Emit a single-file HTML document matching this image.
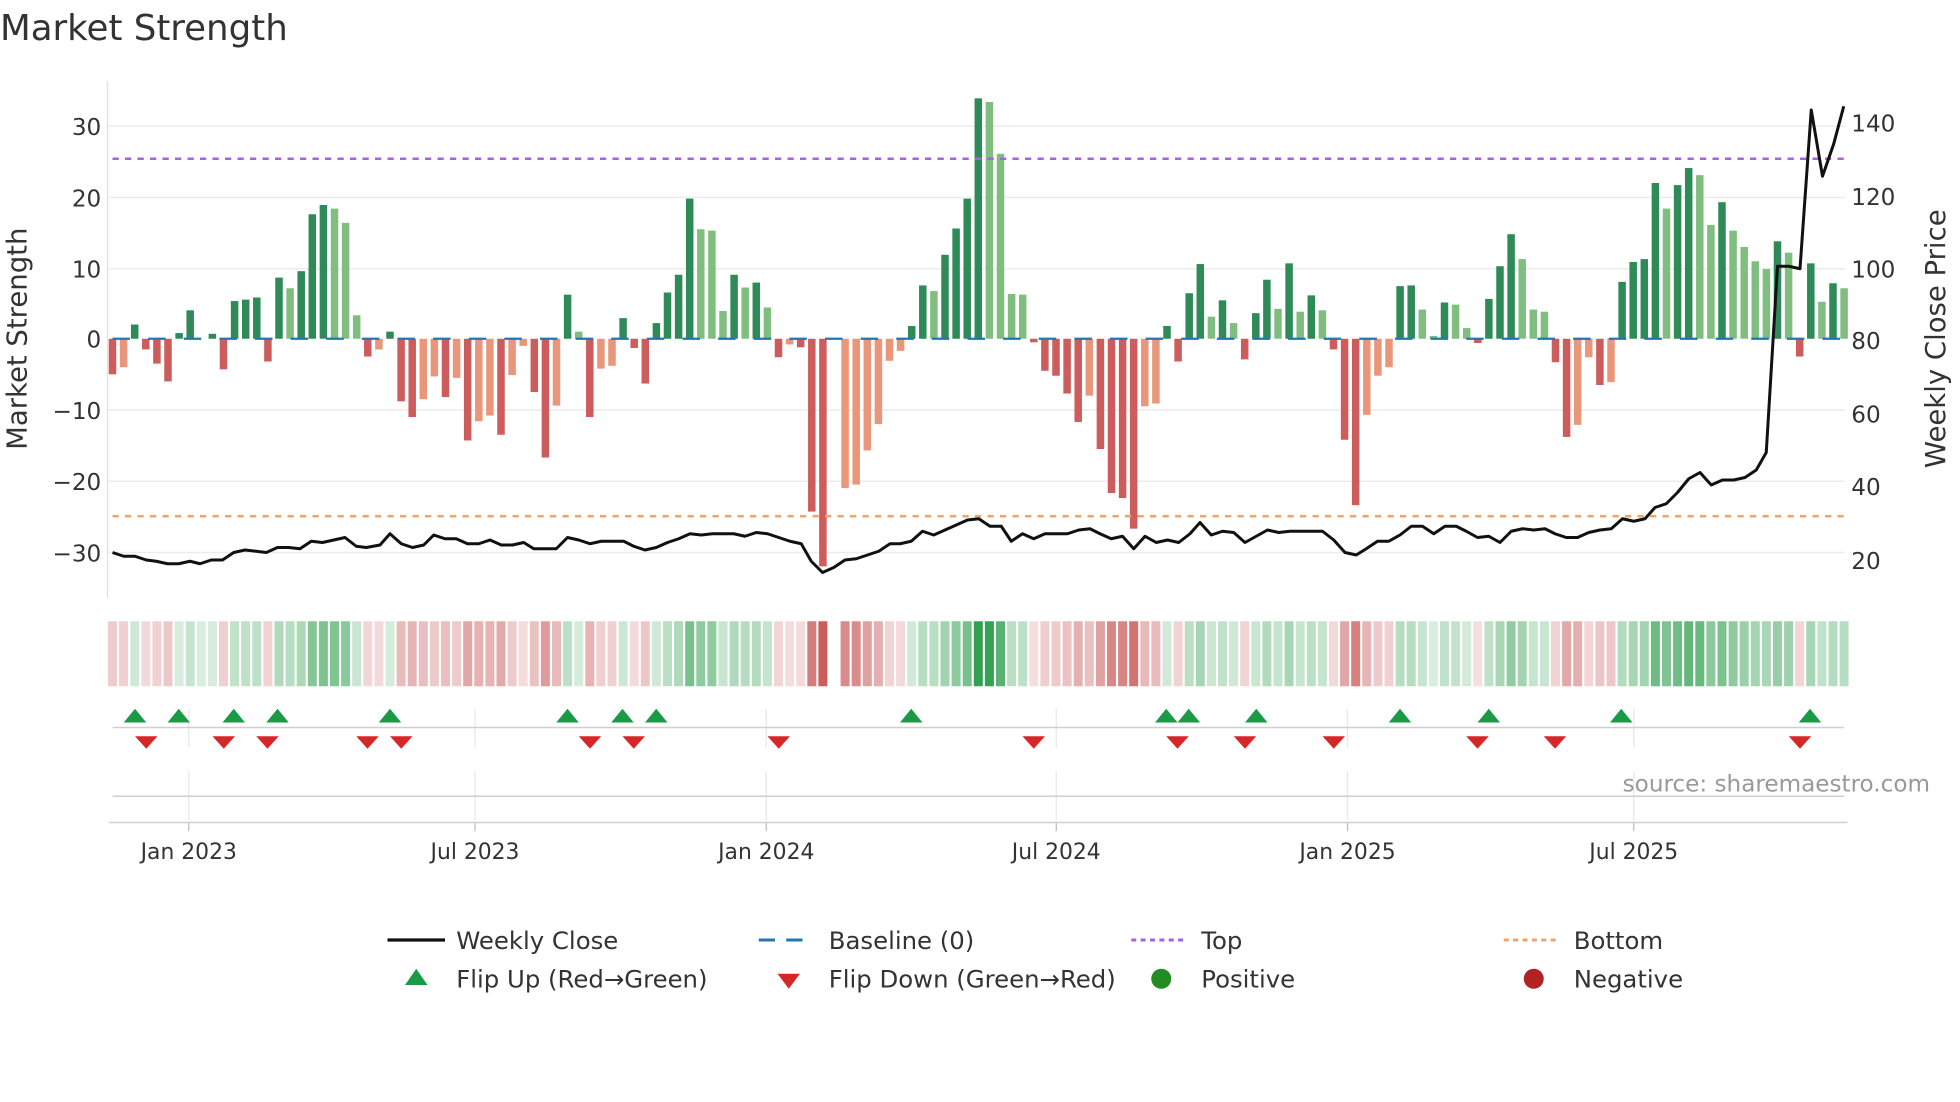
<!DOCTYPE html>
<html><head><meta charset="utf-8"><style>
html,body{margin:0;padding:0;background:#fff;}
svg{display:block;font-family:"DejaVu Sans","Liberation Sans",sans-serif;}
</style></head><body>
<svg id="c" width="1960" height="1102" viewBox="0 0 1568 881.6" xmlns="http://www.w3.org/2000/svg">
<rect width="1568" height="882" fill="#fff"/>
<text x="0" y="32" font-size="28.5" fill="#333">Market Strength</text>
<g id="grid" stroke="#ececec" stroke-width="1.2"></g>
<line x1="86" y1="65" x2="86" y2="478" stroke="#e0e0e0" stroke-width="1"/>
<g id="bars"></g>
<line x1="90" y1="271" x2="1476" y2="271" stroke="#1f77b4" stroke-width="1.8" stroke-dasharray="14 14.5"/>
<line x1="90" y1="127" x2="1476" y2="127" stroke="#a463e0" stroke-width="2" stroke-dasharray="5 5"/>
<line x1="90" y1="413" x2="1476" y2="413" stroke="#f0a468" stroke-width="2" stroke-dasharray="5 5"/>
<polyline id="price" fill="none" stroke="#111" stroke-width="2.4" stroke-linejoin="round"/>
<g font-size="18.5" fill="#333" text-anchor="end">
<text x="81" y="108">30</text><text x="81" y="165">20</text><text x="81" y="222">10</text><text x="81" y="278">0</text>
<text x="81" y="335">−10</text><text x="81" y="392">−20</text><text x="81" y="449">−30</text>
</g>
<g font-size="18.5" fill="#333">
<text x="1481" y="105">140</text><text x="1481" y="164">120</text><text x="1481" y="222">100</text><text x="1481" y="279">80</text>
<text x="1481" y="338">60</text><text x="1481" y="396">40</text><text x="1481" y="455">20</text>
</g>
<text transform="translate(21,271) rotate(-90)" font-size="22" fill="#333" text-anchor="middle">Market Strength</text>
<text transform="translate(1556,271) rotate(-90)" font-size="22" fill="#333" text-anchor="middle">Weekly Close Price</text>
<g id="heat"></g>
<g id="vgrid" stroke="#e6e8ec" stroke-width="1"></g>
<line x1="90" y1="582" x2="1475" y2="582" stroke="#cfcfcf" stroke-width="1.2"/>
<line x1="90" y1="637" x2="1475" y2="637" stroke="#cfcfcf" stroke-width="1.2"/>
<line x1="87" y1="658" x2="1478" y2="658" stroke="#cfcfcf" stroke-width="1.2"/>
<g id="marks"></g>
<text x="1544" y="633" font-size="18.5" fill="#999" text-anchor="end">source: sharemaestro.com</text>
<g id="xt" font-size="17.5" fill="#333" text-anchor="middle"></g>
<g font-size="19.5" fill="#333">
<line x1="310" y1="752" x2="356" y2="752" stroke="#111" stroke-width="2.6"/>
<text x="365" y="759">Weekly Close</text>
<line x1="607" y1="752" x2="650" y2="752" stroke="#1f77b4" stroke-width="2.4" stroke-dasharray="13 9"/>
<text x="663" y="759">Baseline (0)</text>
<line x1="905" y1="752" x2="948" y2="752" stroke="#a463e0" stroke-width="2.4" stroke-dasharray="4 3.5"/>
<text x="961" y="759">Top</text>
<line x1="1203" y1="752" x2="1246" y2="752" stroke="#f0a468" stroke-width="2.4" stroke-dasharray="4 3.5"/>
<text x="1259" y="759">Bottom</text>
<polygon points="324,788 342,788 333,775" fill="#1a9a45"/>
<text x="365" y="790">Flip Up (Red→Green)</text>
<polygon points="622,779 640,779 631,791" fill="#d62728"/>
<text x="663" y="790">Flip Down (Green→Red)</text>
<circle cx="929" cy="783" r="8" fill="#228b22"/>
<text x="961" y="790">Positive</text>
<circle cx="1227" cy="783" r="8" fill="#b22222"/>
<text x="1259" y="790">Negative</text>
</g>
</svg>
<script>
var NS="http://www.w3.org/2000/svg";
function el(t,a,p){var e=document.createElementNS(NS,t);for(var k in a)e.setAttribute(k,a[k]);p.appendChild(e);return e;}
var d=[[-5,'R'],[-4,'S'],[2,'D'],[-1.5,'R'],[-3.5,'R'],[-6,'R'],[0.8,'D'],[4,'D'],[0,'N'],[0.7,'D'],
[-4.3,'R'],[5.3,'D'],[5.5,'D'],[5.8,'D'],[-3.2,'R'],[8.6,'D'],[7.1,'L'],[9.5,'D'],[17.5,'D'],[18.8,'D'],
[18.3,'L'],[16.3,'L'],[3.3,'L'],[-2.5,'R'],[-1.5,'S'],[1,'D'],[-8.8,'R'],[-11,'R'],[-8.5,'S'],[-5.3,'S'],
[-8.2,'R'],[-5.5,'S'],[-14.3,'R'],[-11.6,'S'],[-10.8,'S'],[-13.5,'R'],[-5.1,'S'],[-1,'S'],[-7.5,'R'],[-16.7,'R'],
[-9.4,'S'],[6.2,'D'],[1,'L'],[-11,'R'],[-4.2,'S'],[-3.8,'S'],[2.9,'D'],[-1.3,'R'],[-6.3,'R'],[2.2,'D'],
[6.5,'D'],[9,'D'],[19.7,'D'],[15.4,'L'],[15.2,'L'],[3.9,'L'],[9,'D'],[7.2,'L'],[7.9,'D'],[4.4,'L'],
[-2.6,'R'],[-0.8,'S'],[-1.2,'R'],[-24.3,'R'],[-32,'R'],[0,'X'],[-21,'S'],[-20.5,'S'],[-15.7,'S'],[-12,'S'],
[-3.1,'S'],[-1.7,'S'],[1.8,'D'],[7.5,'D'],[6.7,'L'],[11.8,'D'],[15.5,'D'],[19.7,'D'],[33.8,'D'],[33.3,'L'],
[26,'L'],[6.3,'L'],[6.2,'L'],[-0.5,'R'],[-4.5,'R'],[-5.2,'R'],[-7.7,'R'],[-11.7,'R'],[-8,'S'],[-15.5,'R'],
[-21.7,'R'],[-22.4,'R'],[-26.7,'R'],[-9.5,'S'],[-9.1,'S'],[1.8,'D'],[-3.2,'R'],[6.4,'D'],[10.5,'D'],[3.1,'L'],
[5.4,'D'],[2.2,'L'],[-2.9,'R'],[3.6,'D'],[8.3,'D'],[4.2,'L'],[10.6,'D'],[3.8,'L'],[6.1,'D'],[4,'L'],
[-1.5,'R'],[-14.2,'R'],[-23.4,'R'],[-10.7,'S'],[-5.2,'S'],[-4,'S'],[7.4,'D'],[7.5,'D'],[4.1,'L'],[0.4,'L'],
[5.1,'D'],[4.8,'L'],[1.5,'L'],[-0.6,'R'],[5.6,'D'],[10.2,'D'],[14.7,'D'],[11.2,'L'],[4.1,'L'],[3.8,'L'],
[-3.3,'R'],[-13.8,'R'],[-12.1,'S'],[-2.6,'S'],[-6.5,'R'],[-6.1,'S'],[8,'D'],[10.8,'D'],[11.2,'D'],[21.9,'D'],
[18.3,'L'],[21.6,'D'],[24,'D'],[23,'L'],[16,'L'],[19.2,'D'],[15.2,'L'],[12.9,'L'],[10.9,'L'],[9.8,'L'],
[13.7,'D'],[12.1,'L'],[-2.5,'R'],[10.6,'D'],[5.2,'L'],[7.8,'D'],[7.1,'L']];
var col={D:'#2e8b57',L:'#80be80',R:'#cd5c5c',S:'#e9967a'};
var bars=document.getElementById('bars'),heat=document.getElementById('heat');
var Z=271,U=5.69,step=8.88;
function mix(a,b,t){return 'rgb('+[0,1,2].map(function(i){return Math.round(a[i]+(b[i]-a[i])*t)}).join(',')+')';}
d.forEach(function(b,i){
 var x=90+i*step,v=b[0];
 if(b[1]=='X')return;
 if(b[1]!='N'){
  var h=Math.abs(v)*U; el('rect',{x:x-3,y:v>0?Z-h:Z,width:6,height:Math.max(h,0.8),fill:col[b[1]]},bars);
 }
 var t=0.18+0.82*Math.min(1,Math.abs(v)/34);
 var c=v>=0?mix([255,255,255],[50,160,80],t):mix([255,255,255],[200,85,85],t);
 el('rect',{x:x-3.6,y:497,width:7.2,height:52,fill:c},heat);
});
var g=document.getElementById('grid');
[101,158,215,328,385,442].forEach(function(y){el('line',{x1:87,y1:y,x2:1476,y2:y},g);});
var p="90,442 99,445 108,445 117,448 125,449 134,451 143,451 152,449 160,451 169,448 178,448 187,442 196,440 205,441 213,442 222,438 231,438 240,439 249,433 258,434 267,432 276,430 285,437 293,438 304,436 312,427 321,435 330,438 339,436 347,428 356,431 365,431 374,435 383,435 392,432 401,436 410,436 419,434 427,439 436,439 445,439 454,430 463,432 472,435 481,433 490,433 499,433 507,437 516,440 525,438 534,434 543,431 552,427 561,428 570,427 578,427 587,427 596,429 605,426 614,427 623,430 632,433 641,435 649,449 658,458 667,454 676,448 685,447 694,444 703,441 712,435 720,435 729,433 738,425 747,428 756,424 765,420 774,416 783,415 792,421 801,421 809,433 818,427 827,431 836,427 845,427 854,427 863,424 872,423 880,427 889,431 898,429 907,439 916,429 925,434 934,432 943,434 952,427 960,418 969,428 978,425 987,426 996,434 1005,429 1014,424 1023,426 1032,425 1040,425 1049,425 1058,425 1067,432 1076,442 1085,444 1093,439 1102,433 1111,433 1120,428 1129,421 1138,421 1147,427 1156,421 1165,421 1173,425 1182,430 1191,429 1200,434 1209,425 1218,423 1227,424 1236,423 1244,427 1253,430 1262,430 1271,426 1280,424 1289,423 1298,415 1307,417 1316,415 1324,406 1333,403 1342,394 1351,383 1360,378 1369,388 1378,384 1387,384 1396,382 1405,376 1413,362 1422,213 1431,213 1440,215 1449,88 1458,141 1467,115 1475,85";
document.getElementById('price').setAttribute('points',p);
var vg=document.getElementById('vgrid'),xt=document.getElementById('xt');
[[151,'Jan 2023'],[380,'Jul 2023'],[613,'Jan 2024'],[845,'Jul 2024'],[1078,'Jan 2025'],[1307,'Jul 2025']].forEach(function(t){
 el('line',{x1:t[0],y1:567,x2:t[0],y2:598},vg);
 el('line',{x1:t[0],y1:617,x2:t[0],y2:656},vg);
 el('line',{x1:t[0],y1:658,x2:t[0],y2:665,stroke:'#bbb'},vg);
 var e=el('text',{x:t[0],y:687},xt);e.textContent=t[1];
});
var m=document.getElementById('marks');
[108,143,187,222,312,454,498,525,729,933,951,1005,1120,1191,1297,1448].forEach(function(x){
 el('polygon',{points:(x-9)+',578 '+(x+9)+',578 '+x+',567',fill:'#1a9a45'},m);});
[117,179,214,294,321,472,507,623,827,942,996,1067,1182,1244,1440].forEach(function(x){
 el('polygon',{points:(x-9)+',589 '+(x+9)+',589 '+x+',599',fill:'#d62728'},m);});
</script>
</body></html>
